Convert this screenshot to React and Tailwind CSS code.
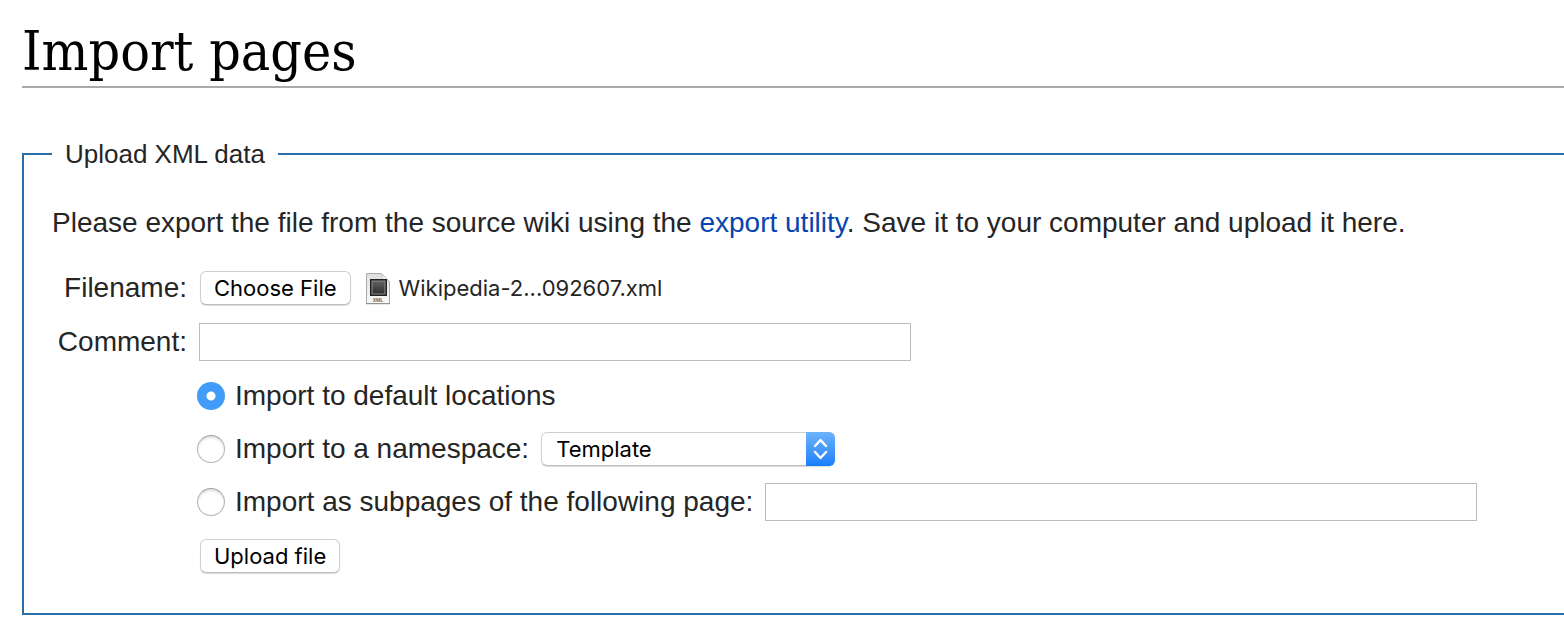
import { useRef, useState } from "react";

const buttonClass =
  "ml-px h-[34px] shrink-0 whitespace-nowrap rounded-md border border-[#cfcfcf] border-b-[#bdbdbd] bg-white px-[13px] font-['Inter',sans-serif] text-[22px] leading-7 text-black shadow-[0_1px_1px_rgba(0,0,0,0.14)]";

const textInputClass =
  "h-[38px] w-full min-w-0 max-w-[712px] border border-[#bcbcbc] bg-white px-2 text-[26px] outline-none";

const radioClass =
  "size-7 shrink-0 appearance-none rounded-full border border-[#b4b4b4] border-t-[#a2a2a2] bg-white shadow-[inset_0_2px_2px_rgba(0,0,0,0.12)] checked:border-0 checked:bg-[radial-gradient(circle,#ffffff_4px,#419bf9_5px)] checked:shadow-none";

function XmlFileIcon() {
  return (
    <svg width="26" height="34" viewBox="0 0 26 34" className="shrink-0" aria-hidden="true">
      <defs>
        <linearGradient id="paper" x1="0" y1="0" x2="0" y2="1">
          <stop offset="0" stopColor="#dedede" />
          <stop offset="1" stopColor="#fafafa" />
        </linearGradient>
        <linearGradient id="chip" x1="0" y1="0" x2="0" y2="1">
          <stop offset="0" stopColor="#606060" />
          <stop offset="1" stopColor="#303030" />
        </linearGradient>
      </defs>
      <path d="M1.5 2.5H16L24.5 10.5V32.5H1.5Z" fill="url(#paper)" stroke="#aaaaaa" />
      <path d="M1 32.7H25" stroke="#8c8c8c" />
      <path d="M16 2.5C17.5 5 18 7 17.5 9.5C20 9 22 9.5 24.5 10.5Z" fill="#ffffff" stroke="#bcbcbc" strokeWidth="0.8" />
      <rect x="5" y="8" width="17" height="17" fill="#202020" />
      <rect x="6.5" y="9.5" width="14" height="14" fill="#8c8c8c" />
      <rect x="7.5" y="10.5" width="12" height="12" fill="url(#chip)" />
      <text x="13" y="30.5" textAnchor="middle" fontSize="5" fontFamily="Liberation Sans, sans-serif" fontWeight="bold" fill="#666666">XML</text>
    </svg>
  );
}

export default function App() {
  const fileRef = useRef(null);
  const [fileName, setFileName] = useState("Wikipedia-2...092607.xml");
  const [mode, setMode] = useState("default");

  return (
    <main className="bg-white pb-3 pl-[22px] pt-4 font-['Liberation_Sans',Arial,sans-serif] text-[28px] leading-9 text-[#252525]">
      <h1 className="border-b-2 border-[#aaaaaa] font-['DejaVu_Serif_Condensed','Liberation_Serif',serif] text-[55px] leading-[70px] text-black">
        Import pages
      </h1>

      <form onSubmit={(e) => e.preventDefault()}>
        <fieldset className="mt-12 border-2 border-r-0 border-[#2a6ea8] pb-[30px] pl-7 pr-7">
          <legend className="px-[13px] text-[26px] leading-9">Upload XML data</legend>

          <p className="mb-5 mt-[33px]">
            Please export the file from the source wiki using the{" "}
            <a href="#export" className="text-[#0645ad]">export utility</a>. Save it to your
            computer and upload it here.
          </p>

          <div className="grid grid-cols-[135px_minmax(0,1fr)] items-center gap-x-3">
            <label htmlFor="file" className="text-right">Filename:</label>
            <div className="flex h-[54px] items-center">
              <button type="button" className={buttonClass} onClick={() => fileRef.current.click()}>
                Choose File
              </button>
              <input
                ref={fileRef}
                id="file"
                type="file"
                className="hidden"
                onChange={(e) => e.target.files[0] && setFileName(e.target.files[0].name)}
              />
              <span className="ml-3.5 flex items-center gap-2 font-['Inter',sans-serif] text-[22px]">
                <XmlFileIcon />
                {fileName}
              </span>
            </div>

            <label htmlFor="comment" className="text-right">Comment:</label>
            <div className="flex h-[54px] items-center">
              <input id="comment" type="text" className={textInputClass} />
            </div>

            <div className="col-start-2 -ml-0.5 flex h-[54px] items-center gap-2.5">
              <input id="default" name="mode" type="radio" className={radioClass} checked={mode === "default"} onChange={() => setMode("default")} />
              <label htmlFor="default">Import to default locations</label>
            </div>

            <div className="col-start-2 -ml-0.5 flex h-[52px] items-center gap-2.5">
              <input id="namespace" name="mode" type="radio" className={radioClass} checked={mode === "namespace"} onChange={() => setMode("namespace")} />
              <label htmlFor="namespace" className="mr-0.5 whitespace-nowrap">Import to a namespace:</label>
              <span className="relative flex h-[34px] w-[294px]">
                <select
                  aria-label="Namespace"
                  defaultValue="Template"
                  className="h-full w-full appearance-none rounded-md border border-[#cfcfcf] border-b-[#bdbdbd] bg-white pl-3.5 pr-9 font-['Inter',sans-serif] text-[22px] leading-7 text-black shadow-[0_1px_1px_rgba(0,0,0,0.14)]"
                >
                  <option>Template</option>
                </select>
                <span className="pointer-events-none absolute inset-y-0 right-0 flex w-[29px] items-center justify-center rounded-r-md bg-linear-to-b from-[#6cb3fa] to-[#157efb]">
                  <svg width="15" height="22" viewBox="0 0 15 22" fill="none" stroke="#ffffff" strokeWidth="2.4" strokeLinecap="round" strokeLinejoin="round" aria-hidden="true">
                    <path d="M2 8L7.5 2L13 8M2 14L7.5 20L13 14" />
                  </svg>
                </span>
              </span>
            </div>

            <div className="col-start-2 -ml-0.5 flex h-[54px] items-center gap-2.5">
              <input id="subpages" name="mode" type="radio" className={radioClass} checked={mode === "subpages"} onChange={() => setMode("subpages")} />
              <label htmlFor="subpages" className="mr-0.5 whitespace-nowrap">
                Import as subpages of the following page:
              </label>
              <input type="text" aria-label="Root page" className={textInputClass} />
            </div>

            <div className="col-start-2 flex h-[54px] items-center">
              <button type="submit" className={buttonClass}>Upload file</button>
            </div>
          </div>
        </fieldset>
      </form>
    </main>
  );
}
